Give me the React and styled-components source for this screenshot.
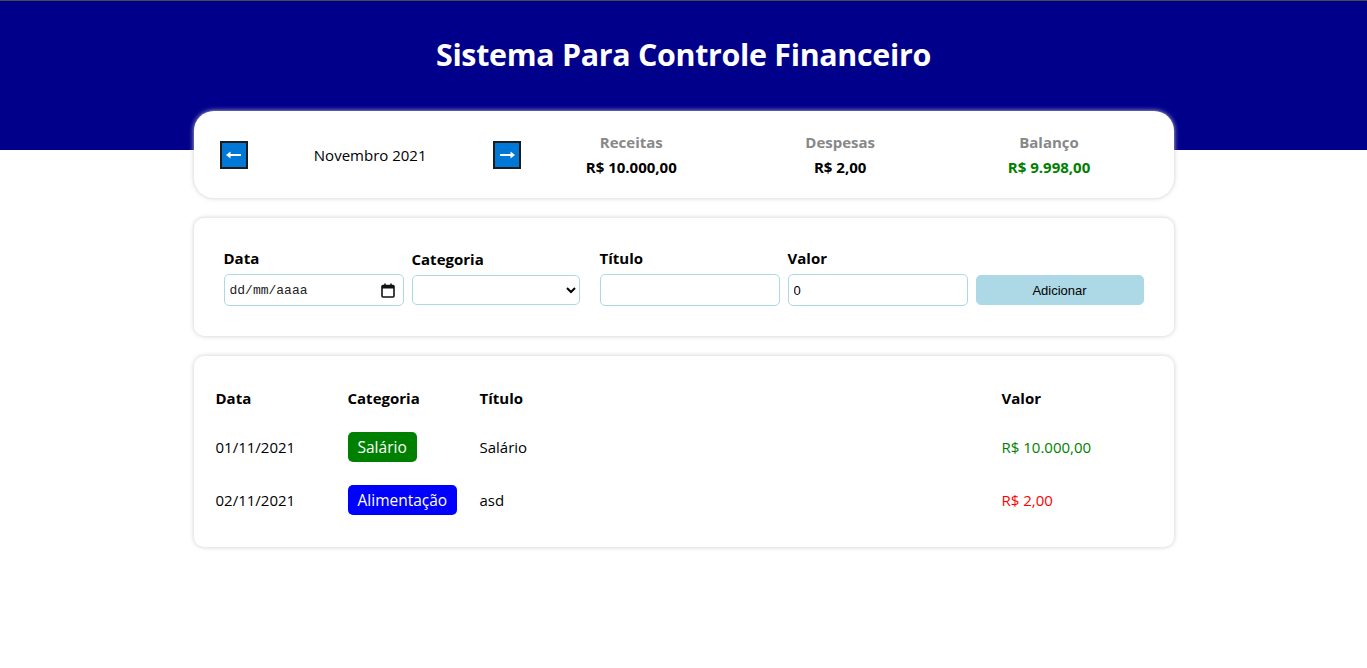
import React from "react";
import styled, { createGlobalStyle } from "styled-components";

const GlobalStyle = createGlobalStyle`
  * { box-sizing: border-box; }
  body {
    margin: 0;
    font-family: "Open Sans", "Noto Sans", sans-serif;
    font-size: 15px;
    color: #000;
    background: #fff;
  }
`;

const Header = styled.div`
  height: 150px;
  background-color: #00008b;
  border-top: 1px solid #4a4a4a;
  text-align: center;
`;

const HeaderText = styled.h1`
  margin: 0;
  padding-top: 33px;
  color: #fff;
  font-size: 30.4px;
  font-weight: 700;
  letter-spacing: -0.3px;
`;

const Body = styled.div`
  max-width: 980px;
  margin: 0 auto 50px;
`;

const Card = styled.div`
  background: #fff;
  box-shadow: 0 0 5px #ccc;
  border-radius: ${(p) => p.$radius || 10}px;
  padding: 20px;
  margin-top: ${(p) => p.$top}px;
`;

const InfoArea = styled(Card)`
  display: flex;
  align-items: center;
  height: 87px;
`;

const MonthArea = styled.div`
  flex: 1;
  display: flex;
  align-items: center;
`;

const MonthArrow = styled.div`
  width: 40px;
  display: flex;
  justify-content: center;
  cursor: pointer;
`;

const MonthTitle = styled.div`
  flex: 1;
  text-align: center;
  font-size: 15px;
`;

const ResumeArea = styled.div`
  flex: 2;
  display: flex;
`;

const ResumeItem = styled.div`
  flex: 1;
  text-align: center;
  font-weight: 700;
`;

const ResumeTitle = styled.div`
  color: #888;
  font-size: 15px;
  margin-bottom: 5px;
`;

const ResumeInfo = styled.div`
  color: ${(p) => p.$color || "#000"};
  font-size: 15px;
`;

const InputArea = styled(Card)`
  display: flex;
  align-items: center;
`;

const InputLabel = styled.label`
  flex: 1;
  margin: 10px;
  min-width: 0;
`;

const InputTitle = styled.div`
  font-weight: 700;
  font-size: 15px;
  line-height: 21px;
  margin-bottom: 5px;
`;

const Input = styled.input`
  box-sizing: content-box;
  width: 100%;
  height: 30px;
  padding: 0 5px;
  border: 1px solid lightblue;
  border-radius: 5px;
  font-family: "Liberation Sans", Arial, sans-serif;
  font-size: 13px;
  color: #000;
  outline: none;
`;

const DateBox = styled.div`
  position: relative;
  width: calc(100% + 12px);
`;

const DateInput = styled(Input)`
  width: calc(100% - 12px);
  font-family: "Liberation Mono", "DejaVu Sans Mono", monospace;
  font-size: 13px;
  &::placeholder { color: #222; opacity: 1; }
`;

const CalendarIcon = styled.svg`
  position: absolute;
  right: 9px;
  top: 9px;
`;

const Select = styled.select`
  width: 100%;
  height: 30px;
  padding: 0 5px;
  border: 1px solid lightblue;
  border-radius: 5px;
  background: #fff;
  font-size: 13px;
  outline: none;
`;

const Button = styled.button`
  width: 100%;
  height: 30px;
  padding: 0 5px;
  border: 1px solid lightblue;
  border-radius: 5px;
  background-color: lightblue;
  color: #000;
  font-family: "Liberation Sans", Arial, sans-serif;
  font-size: 13px;
  cursor: pointer;
`;

const Table = styled.table`
  width: 100%;
  border-collapse: collapse;
`;

const HeadCol = styled.th`
  width: ${(p) => (p.$width ? `${p.$width}px` : "auto")};
  height: 44px;
  padding: 0 0 0 2px;
  text-align: left;
  font-size: 15px;
  font-weight: 700;
`;

const Col = styled.td`
  height: ${(p) => p.$h}px;
  padding: 0 0 0 2px;
  font-size: 15px;
  vertical-align: middle;
  color: ${(p) => p.$color || "#000"};
`;

const Category = styled.div`
  display: inline-block;
  padding: 4px 10px;
  border-radius: 5px;
  color: #fff;
  background-color: ${(p) => p.$color};
  font-size: 15.5px;
`;

const Arrow = ({ dir }) => (
  <svg width="28" height="28" viewBox="0 0 28 28">
    <rect x="1" y="1" width="26" height="26" fill="#0078d7" stroke="#1c1c1c" strokeWidth="2" />
    <g transform={dir === "right" ? "translate(28,0) scale(-1,1)" : undefined}>
      <line x1="9" y1="14" x2="21" y2="14" stroke="#fff" strokeWidth="2" />
      <path d="M6 14 L10.5 10.5 L10.5 17.5 Z" fill="#fff" />
    </g>
  </svg>
);

const items = [
  { date: "01/11/2021", category: "Salário", color: "#008000", title: "Salário", value: "R$ 10.000,00", expense: false },
  { date: "02/11/2021", category: "Alimentação", color: "#0000ff", title: "asd", value: "R$ 2,00", expense: true },
];

export default function App() {
  return (
    <>
      <GlobalStyle />
      <Header>
        <HeaderText>Sistema Para Controle Financeiro</HeaderText>
      </Header>
      <Body>
        <InfoArea $top={-39} $radius={20}>
          <MonthArea>
            <MonthArrow><Arrow dir="left" /></MonthArrow>
            <MonthTitle>Novembro 2021</MonthTitle>
            <MonthArrow><Arrow dir="right" /></MonthArrow>
          </MonthArea>
          <ResumeArea>
            <ResumeItem>
              <ResumeTitle>Receitas</ResumeTitle>
              <ResumeInfo>R$ 10.000,00</ResumeInfo>
            </ResumeItem>
            <ResumeItem>
              <ResumeTitle>Despesas</ResumeTitle>
              <ResumeInfo>R$ 2,00</ResumeInfo>
            </ResumeItem>
            <ResumeItem>
              <ResumeTitle>Balanço</ResumeTitle>
              <ResumeInfo $color="#008000">R$ 9.998,00</ResumeInfo>
            </ResumeItem>
          </ResumeArea>
        </InfoArea>

        <InputArea $top={20}>
          <InputLabel>
            <InputTitle>Data</InputTitle>
            <DateBox>
              <DateInput placeholder="dd/mm/aaaa" />
              <CalendarIcon width="14" height="15" viewBox="0 0 14 15">
                <rect x="1" y="2.5" width="12" height="11.5" rx="1" fill="none" stroke="#111" strokeWidth="1.6" />
                <rect x="1" y="2.5" width="12" height="3" fill="#111" />
                <line x1="4" y1="0.5" x2="4" y2="3" stroke="#111" strokeWidth="1.5" />
                <line x1="10" y1="0.5" x2="10" y2="3" stroke="#111" strokeWidth="1.5" />
              </CalendarIcon>
            </DateBox>
          </InputLabel>
          <InputLabel>
            <InputTitle>Categoria</InputTitle>
            <Select defaultValue="">
              <option value=""></option>
              <option value="food">Alimentação</option>
              <option value="rent">Aluguel</option>
              <option value="salary">Salário</option>
            </Select>
          </InputLabel>
          <InputLabel>
            <InputTitle>Título</InputTitle>
            <Input type="text" />
          </InputLabel>
          <InputLabel>
            <InputTitle>Valor</InputTitle>
            <Input type="number" defaultValue={0} />
          </InputLabel>
          <InputLabel>
            <InputTitle>&nbsp;</InputTitle>
            <Button>Adicionar</Button>
          </InputLabel>
        </InputArea>

        <Card $top={20}>
          <Table>
            <thead>
              <tr>
                <HeadCol $width={132}>Data</HeadCol>
                <HeadCol $width={132}>Categoria</HeadCol>
                <HeadCol>Título</HeadCol>
                <HeadCol $width={154}>Valor</HeadCol>
              </tr>
            </thead>
            <tbody>
              {items.map((it, i) => (
                <tr key={i}>
                  <Col $h={i === 0 ? 53 : 54}>{it.date}</Col>
                  <Col $h={i === 0 ? 53 : 54}>
                    <Category $color={it.color}>{it.category}</Category>
                  </Col>
                  <Col $h={i === 0 ? 53 : 54}>{it.title}</Col>
                  <Col $h={i === 0 ? 53 : 54} $color={it.expense ? "#ff0000" : "#008000"}>
                    {it.value}
                  </Col>
                </tr>
              ))}
            </tbody>
          </Table>
        </Card>
      </Body>
    </>
  );
}
